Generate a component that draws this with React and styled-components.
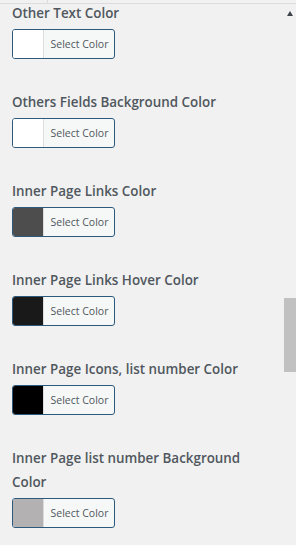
import React from "react";
import styled, { createGlobalStyle } from "styled-components";

const Global = createGlobalStyle`
  html, body { margin: 0; padding: 0; background: #f1f1f1; }
  body { width: 296px; height: 545px; overflow: hidden; }
`;

const Page = styled.div`
  position: relative;
  width: 296px;
  height: 545px;
  background: #f1f1f1;
  font-family: "Open Sans", "Noto Sans", sans-serif;
  overflow: hidden;
`;

const TopStrip = styled.div`
  height: 3px;
  border-bottom: 1px solid #dcdcde;
  display: flex;
`;

const TopCell = styled.div`
  width: 47px;
  border-right: 1px solid #dcdcde;
`;

const List = styled.div`
  display: flex;
  flex-direction: column;
  gap: 31px;
  padding: 0 24px 0 12px;
  margin-top: -3px;
`;

const Field = styled.div`
  display: flex;
  flex-direction: column;
  gap: 4px;
`;

const Label = styled.div`
  max-width: 236px;
  font-size: 13.4px;
  font-weight: 600;
  line-height: 24px;
  color: #50575e;
`;

const ColorButton = styled.button`
  display: flex;
  align-items: stretch;
  width: 103px;
  height: 30px;
  padding: 0;
  border: 1px solid #2c5a7e;
  border-radius: 3px;
  background: #f6f7f7;
  overflow: hidden;
  cursor: pointer;
`;

const Swatch = styled.span`
  width: 30px;
  background: ${(p) => p.$color};
  border-right: 1px solid #dcdcde;
`;

const ButtonText = styled.span`
  flex: 1;
  display: flex;
  align-items: center;
  justify-content: center;
  font-family: "Open Sans", "Noto Sans", sans-serif;
  font-size: 10.5px;
  color: #50575e;
  padding-left: 1px;
`;

const Arrow = styled.div`
  position: absolute;
  top: 11px;
  left: 287px;
  width: 0;
  height: 0;
  border-left: 3.5px solid transparent;
  border-right: 3.5px solid transparent;
  border-bottom: 5px solid #3c434a;
`;

const Thumb = styled.div`
  position: absolute;
  left: 284px;
  top: 298px;
  width: 12px;
  height: 74px;
  background: #c1c1c1;
`;

const fields = [
  { label: "Other Text Color", color: "#ffffff" },
  { label: "Others Fields Background Color", color: "#ffffff" },
  { label: "Inner Page Links Color", color: "#4d4d4d" },
  { label: "Inner Page Links Hover Color", color: "#191919" },
  { label: "Inner Page Icons, list number Color", color: "#000000" },
  { label: "Inner Page list number Background Color", color: "#b3b1b1" },
];

export default function App() {
  return (
    <Page>
      <Global />
      <TopStrip>
        <TopCell />
      </TopStrip>
      <List>
        {fields.map((f) => (
          <Field key={f.label}>
            <Label>{f.label}</Label>
            <ColorButton type="button">
              <Swatch $color={f.color} />
              <ButtonText>Select Color</ButtonText>
            </ColorButton>
          </Field>
        ))}
      </List>
      <Arrow />
      <Thumb />
    </Page>
  );
}
